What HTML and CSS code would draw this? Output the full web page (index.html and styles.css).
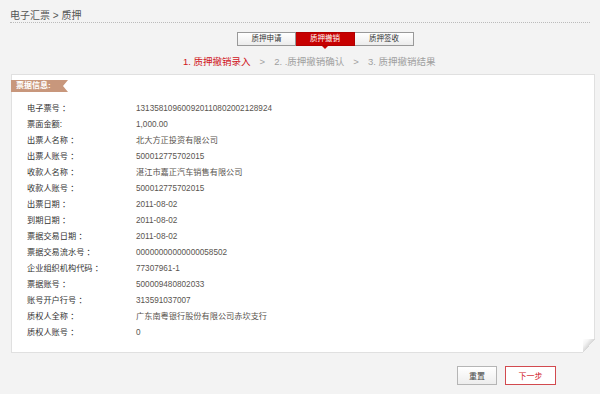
FILE: index.html
```html
<!DOCTYPE html>
<html lang="zh-CN">
<head>
<meta charset="utf-8">
<title>质押撤销</title>
<link rel="stylesheet" href="styles.css">
</head>
<body>
<div class="page">
  <div class="crumb">电子汇票 &gt; 质押</div>
  <div class="tabs">
    <span class="tab">质押申请</span>
    <span class="tab active">质押撤销</span>
    <span class="tab">质押签收</span>
  </div>
  <div class="steps">
    <span class="cur">1. 质押撤销录入</span>
    <span class="sep">&gt;</span>
    <span>2. .质押撤销确认</span>
    <span class="sep">&gt;</span>
    <span>3. 质押撤销结果</span>
  </div>
  <div class="card">
    <div class="tag">票据信息:</div>
    <dl class="rows">
      <div class="row"><dt>电子票号 ：</dt><dd>131358109600920110802002128924</dd></div>
      <div class="row"><dt>票面金额:</dt><dd>1,000.00</dd></div>
      <div class="row"><dt>出票人名称 ：</dt><dd>北大方正投资有限公司</dd></div>
      <div class="row"><dt>出票人账号 ：</dt><dd>500012775702015</dd></div>
      <div class="row"><dt>收款人名称 ：</dt><dd>湛江市嘉正汽车销售有限公司</dd></div>
      <div class="row"><dt>收款人账号 ：</dt><dd>500012775702015</dd></div>
      <div class="row"><dt>出票日期 ：</dt><dd>2011-08-02</dd></div>
      <div class="row"><dt>到期日期 ：</dt><dd>2011-08-02</dd></div>
      <div class="row"><dt>票据交易日期 ：</dt><dd>2011-08-02</dd></div>
      <div class="row"><dt>票据交易流水号 ：</dt><dd>00000000000000058502</dd></div>
      <div class="row"><dt>企业组织机构代码 ：</dt><dd>77307961-1</dd></div>
      <div class="row"><dt>票据账号 ：</dt><dd>500009480802033</dd></div>
      <div class="row"><dt>账号开户行号 ：</dt><dd>313591037007</dd></div>
      <div class="row"><dt>质权人全称 ：</dt><dd>广东南粤银行股份有限公司赤坎支行</dd></div>
      <div class="row"><dt>质权人账号 ：</dt><dd>0</dd></div>
    </dl>
  </div>
  <div class="actions">
    <button class="btn">重置</button>
    <button class="btn primary">下一步</button>
  </div>
</div>
</body>
</html>
```
FILE: styles.css
```css
html, body {
  margin: 0;
  padding: 0;
  background: #f3f3f3;
}
body {
  font-family: "Liberation Sans", "Noto Sans CJK SC", sans-serif;
  color: #333;
}
.page {
  width: 585px;
  padding-left: 10px;
}
.crumb {
  width: 580px;
  padding-top: 10px;
  font-size: 10px;
  line-height: 12px;
  color: #555;
  border-bottom: 1px dotted #bbb;
}
.tabs {
  display: flex;
  margin-top: 9px;
  margin-left: 227px;
}
.tab {
  position: relative;
  width: 57px;
  height: 12px;
  line-height: 12px;
  font-size: 7.5px;
  text-align: center;
  color: #333;
  border: 1px solid #999;
  background: linear-gradient(#ffffff, #ececec);
}
.tab + .tab {
  border-left: none;
  width: 58px;
}
.tab.active {
  background: #c70000;
  border-color: #b00000;
  color: #fff;
}
.tab.active::after {
  content: "";
  position: absolute;
  left: 50%;
  bottom: -4px;
  margin-left: -3px;
  border-left: 3px solid transparent;
  border-right: 3px solid transparent;
  border-top: 3px solid #c70000;
}
.steps {
  display: flex;
  gap: 8px;
  margin-top: 9px;
  margin-left: 173px;
  font-size: 9.5px;
  line-height: 14px;
  color: #a0a0a0;
}
.steps .cur {
  color: #d0141b;
}
.steps .sep {
  margin: 0 1px;
}
.card {
  position: relative;
  margin-top: 5px;
  margin-left: 1px;
  width: 582px;
  background: #fff;
  border: 1px solid #e0e0e0;
  padding: 5px 0 11px;
}
.card::after {
  content: "";
  position: absolute;
  right: -1px;
  bottom: -1px;
  width: 12px;
  height: 14px;
  background: linear-gradient(to top left, #f3f3f3 50%, #d6d6d6 50%, #f4f4f4 75%, #fff);
}
.tag {
  width: 52px;
  height: 12px;
  line-height: 12px;
  margin-left: -1px;
  padding-left: 5px;
  font-size: 8px;
  font-weight: bold;
  color: #fff;
  background: #c8977c;
  clip-path: polygon(0 0, 100% 0, calc(100% - 5px) 50%, 100% 100%, 0 100%);
}
.rows {
  margin: 9px 0 0 0;
  padding-left: 15px;
}
.row {
  display: flex;
  height: 16px;
  line-height: 16px;
  font-size: 8.2px;
}
.row dt {
  width: 109px;
  color: #333;
}
.row dd {
  margin: 0;
  color: #5a5550;
}
.actions {
  display: flex;
  justify-content: flex-end;
  gap: 8px;
  width: 546px;
  margin-top: 13px;
}
.btn {
  height: 19px;
  width: 40px;
  padding: 0;
  font-family: inherit;
  font-size: 8px;
  color: #444;
  background: linear-gradient(#ffffff, #ededed);
  border: 1px solid #b5b5b5;
}
.btn.primary {
  width: 51px;
  color: #d0141b;
  border-color: #d24a4f;
  background: #fff;
}
```
